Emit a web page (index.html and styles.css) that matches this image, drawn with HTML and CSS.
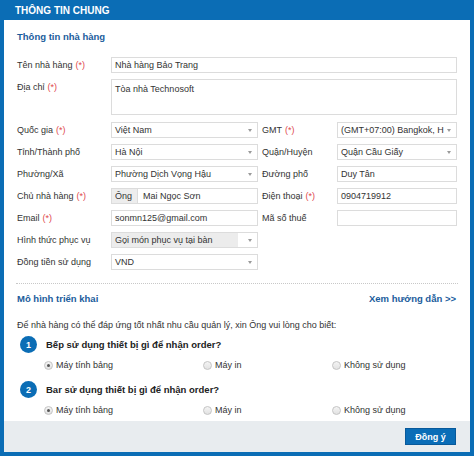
FILE: index.html
```html
<!DOCTYPE html>
<html lang="vi">
<head>
<meta charset="utf-8">
<title>Thông tin chung</title>
<link rel="stylesheet" href="styles.css">
</head>
<body>
<div class="dialog">
  <div class="dialog-title">THÔNG TIN CHUNG</div>
  <div class="dialog-body">
    <div class="section-title">Thông tin nhà hàng</div>
    <div class="form-grid">
      <label class="lbl">Tên nhà hàng <span class="req">(*)</span></label>
      <div class="field span3"><div class="input">Nhà hàng Bảo Trang</div></div>

      <label class="lbl lbl-top">Địa chỉ <span class="req">(*)</span></label>
      <div class="field span3"><div class="input textarea">Tòa nhà Technosoft</div></div>

      <label class="lbl">Quốc gia <span class="req">(*)</span></label>
      <div class="field"><div class="input select">Việt Nam<span class="arrow"></span></div></div>
      <label class="lbl lbl-right">GMT <span class="req">(*)</span></label>
      <div class="field"><div class="input select">(GMT+07:00) Bangkok, H<span class="arrow"></span></div></div>

      <label class="lbl">Tỉnh/Thành phố</label>
      <div class="field"><div class="input select">Hà Nội<span class="arrow"></span></div></div>
      <label class="lbl lbl-right">Quận/Huyện</label>
      <div class="field"><div class="input select">Quận Cầu Giấy<span class="arrow"></span></div></div>

      <label class="lbl">Phường/Xã</label>
      <div class="field"><div class="input select">Phường Dịch Vọng Hậu<span class="arrow"></span></div></div>
      <label class="lbl lbl-right">Đường phố</label>
      <div class="field"><div class="input">Duy Tân</div></div>

      <label class="lbl">Chủ nhà hàng <span class="req">(*)</span></label>
      <div class="field group"><div class="addon">Ông</div><div class="input grow">Mai Ngọc Sơn</div></div>
      <label class="lbl lbl-right">Điện thoại <span class="req">(*)</span></label>
      <div class="field"><div class="input">0904719912</div></div>

      <label class="lbl">Email <span class="req">(*)</span></label>
      <div class="field"><div class="input">sonmn125@gmail.com</div></div>
      <label class="lbl lbl-right">Mã số thuế</label>
      <div class="field"><div class="input"></div></div>

      <label class="lbl">Hình thức phục vụ</label>
      <div class="field"><div class="input select selected"><span class="sel-text">Gọi món phục vụ tại bàn</span><span class="arrow"></span></div></div>
      <div class="empty span2"></div>

      <label class="lbl">Đồng tiền sử dụng</label>
      <div class="field"><div class="input select">VND<span class="arrow"></span></div></div>
      <div class="empty span2"></div>
    </div>

    <div class="separator"></div>

    <div class="section-head">
      <div class="section-title">Mô hình triển khai</div>
      <a class="guide-link">Xem hướng dẫn &gt;&gt;</a>
    </div>
    <p class="intro">Để nhà hàng có thể đáp ứng tốt nhất nhu cầu quản lý, xin Ông vui lòng cho biết:</p>

    <div class="question">
      <span class="num">1</span>
      <span class="q-text">Bếp sử dụng thiết bị gì để nhận order?</span>
    </div>
    <div class="options">
      <div class="opt opt1"><span class="radio checked"></span>Máy tính bảng</div>
      <div class="opt opt2"><span class="radio"></span>Máy in</div>
      <div class="opt"><span class="radio"></span>Không sử dụng</div>
    </div>

    <div class="question">
      <span class="num">2</span>
      <span class="q-text">Bar sử dụng thiết bị gì để nhận order?</span>
    </div>
    <div class="options">
      <div class="opt opt1"><span class="radio checked"></span>Máy tính bảng</div>
      <div class="opt opt2"><span class="radio"></span>Máy in</div>
      <div class="opt"><span class="radio"></span>Không sử dụng</div>
    </div>
  </div>
  <div class="dialog-footer">
    <button class="btn-primary">Đồng ý</button>
  </div>
</div>
</body>
</html>
```
FILE: styles.css
```css
* { box-sizing: border-box; }
html, body { margin: 0; padding: 0; }
body {
  width: 474px;
  height: 456px;
  font-family: "Liberation Sans", Arial, sans-serif;
  font-size: 9px;
  color: #333;
  overflow: hidden;
}
.dialog {
  width: 474px;
  height: 456px;
  background: #0b6db5;
  padding: 0 4px 4px 4px;
  display: flex;
  flex-direction: column;
}
.dialog-title {
  height: 20px;
  line-height: 21px;
  padding-left: 11px;
  color: #fff;
  font-weight: bold;
  font-size: 10px;
}
.dialog-body {
  background: #fff;
  height: 401px;
  padding: 11px 13px 0 13px;
}
.section-title {
  color: #1a5c9c;
  font-weight: bold;
  font-size: 9.5px;
  line-height: 12px;
}
.form-grid {
  margin-top: 14px;
  display: grid;
  grid-template-columns: 94px 147px 79px 120px;
  grid-auto-rows: auto;
  row-gap: 6px;
}
.lbl {
  display: flex;
  align-items: center;
  height: 16px;
  color: #333;
  white-space: nowrap;
}
.lbl-top { align-items: flex-start; padding-top: 3px; }
.lbl-right { padding-left: 4px; }
.req { color: #e0474c; margin-left: 3px; }
.field { display: flex; min-width: 0; }
.span3 { grid-column: span 3; }
.span2 { grid-column: span 2; }
.input {
  flex: 1;
  min-width: 0;
  height: 16px;
  border: 1px solid #dcdcdc;
  background: #fff;
  padding: 0 3px;
  line-height: 14px;
  color: #333;
  white-space: nowrap;
  overflow: hidden;
  position: relative;
}
.textarea {
  height: 36px;
  margin-bottom: 1px;
  padding-top: 2px;
}
.select { padding-right: 16px; }
.arrow {
  position: absolute;
  right: 5px;
  top: 6px;
  width: 0;
  height: 0;
  border-left: 2.5px solid transparent;
  border-right: 2.5px solid transparent;
  border-top: 3px solid #9a9a9a;
}
.selected { padding: 0; display: flex; }
.sel-text {
  display: block;
  width: 126px;
  background: #ececec;
  padding: 0 3px;
}
.group .addon {
  flex: none;
  width: 26px;
  height: 16px;
  border: 1px solid #dcdcdc;
  border-right: none;
  background: #ededed;
  line-height: 14px;
  padding-left: 3px;
  color: #333;
}
.group .input { padding-left: 5px; }
.separator {
  margin: 13px -1px 0 -1px;
  border-top: 1px dotted #c8c8c8;
  height: 0;
}
.section-head {
  margin-top: 9px;
  display: flex;
  justify-content: space-between;
  align-items: center;
  padding-right: 1px;
}
.guide-link {
  color: #1a5c9c;
  font-weight: bold;
  font-size: 9.5px;
  line-height: 12px;
  cursor: pointer;
}
.intro {
  margin: 14px 0 0 0;
  line-height: 12px;
  color: #333;
}
.question {
  display: flex;
  align-items: center;
  margin-top: 5px;
  height: 17px;
}
.options + .question { margin-top: 11px; }
.num {
  width: 17px;
  height: 17px;
  border-radius: 50%;
  background: #0b6db5;
  color: #fff;
  font-weight: bold;
  font-size: 9px;
  display: flex;
  align-items: center;
  justify-content: center;
  margin-left: 3px;
  margin-right: 9px;
}
.q-text {
  font-weight: bold;
  font-size: 9.5px;
  color: #222;
}
.options {
  display: flex;
  margin-top: 7px;
  padding-left: 27px;
  height: 10px;
  align-items: center;
}
.opt {
  display: flex;
  align-items: center;
  color: #333;
  white-space: nowrap;
}
.opt1 { width: 159px; }
.opt2 { width: 129px; }
.radio {
  width: 9px;
  height: 9px;
  border-radius: 50%;
  border: 1px solid #c4c4c4;
  background: linear-gradient(#f4f4f4, #e2e2e2);
  margin-right: 3px;
  position: relative;
}
.radio.checked::after {
  content: "";
  position: absolute;
  left: 2px;
  top: 2px;
  width: 3px;
  height: 3px;
  border-radius: 50%;
  background: #555;
}
.dialog-footer {
  flex: 1;
  background: #e8ecef;
  display: flex;
  justify-content: flex-end;
  align-items: flex-start;
  padding: 7px 14px 0 0;
}
.btn-primary {
  width: 51px;
  height: 17px;
  background: #0a6db7;
  border: 1px solid #08599a;
  color: #fff;
  font-family: "Liberation Sans", Arial, sans-serif;
  font-weight: bold;
  font-size: 9px;
  padding: 0;
  cursor: pointer;
}
```
